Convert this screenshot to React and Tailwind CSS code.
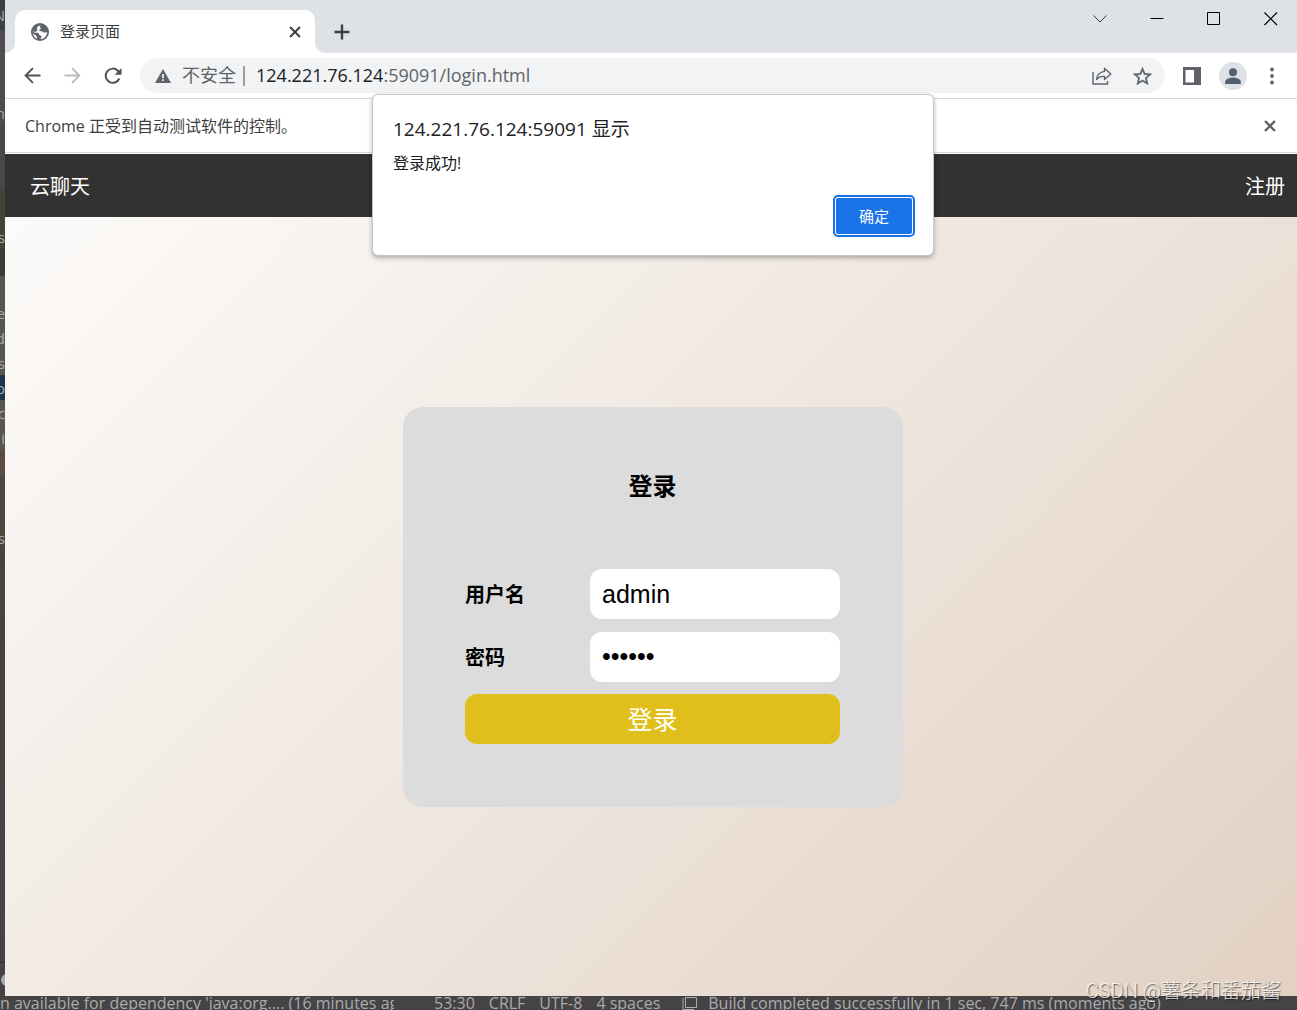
import React from "react";

const UI = "font-['Open_Sans','Noto_Sans_CJK_SC',sans-serif]";

const gutter = [
  { h: "h-[30px]", bg: "bg-[#3c3f44]", t: "N" },
  { h: "h-[70px]", bg: "bg-[#514b4d]", t: "" },
  { h: "h-[26px]", bg: "bg-[#514b4d]", t: "n" },
  { h: "h-[64px]", bg: "bg-[#4b4748]", t: "" },
  { h: "h-[35px]", bg: "bg-[#3f4537]", t: "" },
  { h: "h-[24px]", bg: "bg-[#3f4537]", t: "s" },
  { h: "h-[27px]", bg: "bg-[#3a3c38]", t: "" },
  { h: "h-[24px]", bg: "bg-[#56584f]", t: "" },
  { h: "h-[25px]", bg: "bg-[#56584f]", t: "e" },
  { h: "h-[25px]", bg: "bg-[#56584f]", t: "d" },
  { h: "h-[25px]", bg: "bg-[#56584f]", t: "s" },
  { h: "h-[25px]", bg: "bg-[#1f3650]", t: "o" },
  { h: "h-[25px]", bg: "bg-[#56584f]", t: "c" },
  { h: "h-[25px]", bg: "bg-[#56584f]", t: "i" },
  { h: "h-[25px]", bg: "bg-[#5d4b41]", t: "" },
  { h: "h-[50px]", bg: "bg-[#4b4748]", t: "" },
  { h: "h-[25px]", bg: "bg-[#4a4a3c]", t: "s" },
];

function Globe() {
  return (
    <svg viewBox="0 0 18 18" className="size-[18px]" aria-hidden="true">
      <circle cx="9" cy="9" r="9" fill="#5f6368" />
      <path d="M10.800 1.900C9.600 2.300 8.500 3 8.800 4c.2.800 1.200.600 1.100 1.500-.1.900-1.900 1-1.700 2 .1.700 1.300.700 2.300.700 1.400 0 1.500 1.400 2.800 1.400 1.100 0 2-.4 2.900-.2-.4 3.600-3 6.300-6.500 6.800-.2-1.100.8-1.500.8-2.500 0-1.500-2.300-.9-2.600-2.600-.1-.9-.9-1.300-1.900-1.300-1.500 0-2.800-.3-4.200-1.400.2 2.100 1.200 3.300 2.500 3.500 1 .2.700 1.400 1.500 1.900.4.300.4 1.200.3 1.900C3.300 14.600 1.600 11.900 1.900 8.400c1.200.4 2.300.5 3.300 0 1.100-.6 1.200-1.700.9-2.500-.3-1-.3-1.600.5-2.200 1-.7 2-1.800 4.200-1.800z" fill="#fff" />
    </svg>
  );
}

function Cross({ className, width = 2 }) {
  return (
    <svg viewBox="0 0 12 12" className={className} stroke="currentColor" strokeWidth={width} fill="none" aria-hidden="true">
      <path d="M1 1l10 10M11 1L1 11" />
    </svg>
  );
}

function TabStrip() {
  return (
    <header className="flex h-[53px] items-end bg-[#dee1e6]">
      <div className="h-[10px] w-[10px] shrink-0 bg-white">
        <div className="size-full rounded-br-[10px] bg-[#dee1e6]" />
      </div>
      <div className="flex h-[43px] w-[300px] shrink-0 items-center rounded-t-[10px] bg-white pl-4 pr-[14px] text-[#3c4043]">
        <Globe />
        <span className="ml-[11px] text-[15px]">登录页面</span>
        <button aria-label="关闭标签页" className="ml-auto">
          <Cross className="size-[12px]" />
        </button>
      </div>
      <div className="h-[10px] w-[10px] shrink-0 bg-white">
        <div className="size-full rounded-bl-[10px] bg-[#dee1e6]" />
      </div>
      <button aria-label="新标签页" className="ml-[9px] flex h-[43px] items-center text-[#3c4043]">
        <svg viewBox="0 0 16 16" className="size-[16px]" stroke="currentColor" strokeWidth="2.400" aria-hidden="true">
          <path d="M8 .5v15M.5 8h15" />
        </svg>
      </button>
      <div className="ml-auto flex h-full items-start gap-[43px] pr-[19px] pt-[12px] text-black">
        <button aria-label="搜索标签页">
          <svg viewBox="0 0 14 14" className="size-[14px]" fill="none" stroke="#333" aria-hidden="true">
            <path d="M.5 3.500l6.500 6.500 6.500-6.500" />
          </svg>
        </button>
        <button aria-label="最小化">
          <svg viewBox="0 0 14 14" className="size-[14px]" stroke="currentColor" aria-hidden="true">
            <path d="M.5 6.500h13" />
          </svg>
        </button>
        <button aria-label="最大化">
          <svg viewBox="0 0 14 14" className="size-[14px]" fill="none" stroke="currentColor" aria-hidden="true">
            <path d="M.5.5h12v12H.5z" />
          </svg>
        </button>
        <button aria-label="关闭">
          <svg viewBox="0 0 14 14" className="size-[14px]" fill="none" stroke="currentColor" strokeWidth="1.200" aria-hidden="true">
            <path d="M.5.5l12.500 12.500M13 .5L.5 13" />
          </svg>
        </button>
      </div>
    </header>
  );
}

function Toolbar() {
  return (
    <div className="flex h-[46px] items-center border-b border-[#d5d7da] bg-white pl-[19px] pr-[23px] text-[#5f6368]">
      <div className="flex shrink-0 gap-[23px]">
        <button aria-label="后退">
          <svg viewBox="0 0 18 18" className="size-[17px]" fill="none" stroke="#505458" strokeWidth="2" aria-hidden="true">
            <path d="M17.500 9H2M9.500 1.200L1.700 9l7.800 7.800" />
          </svg>
        </button>
        <button aria-label="前进">
          <svg viewBox="0 0 18 18" className="size-[17px]" fill="none" stroke="#babcbe" strokeWidth="2" aria-hidden="true">
            <path d="M.5 9H16M8.500 1.200L16.300 9l-7.800 7.800" />
          </svg>
        </button>
        <button aria-label="重新加载">
          <svg viewBox="0 0 18 18" className="size-[18px]" fill="none" stroke="#505458" strokeWidth="2" aria-hidden="true">
            <path d="M15.300 11.500A7.100 7.100 0 1 1 13.800 3.700L15.500 5.400" />
            <path d="M17.500 1v6.800h-6.800z" fill="#505458" stroke="none" />
          </svg>
        </button>
      </div>
      <div className="ml-[18px] flex h-[35px] min-w-0 flex-1 items-center rounded-full bg-[#f1f3f4] pl-[15px] pr-[13px]">
        <svg viewBox="0 0 16 14" className="h-[14px] w-[16px] shrink-0" aria-hidden="true">
          <path d="M8 0l8 14H0z" fill="#5f6368" />
          <path d="M7.200 5h1.600v4H7.200zM7.200 10.300h1.600v1.600H7.200z" fill="#fff" />
        </svg>
        <span className="ml-[11px] shrink-0 text-[18px]">不安全</span>
        <span className="ml-[7px] h-[20px] w-[2px] shrink-0 bg-[#9a9da1]" />
        <div className="ml-[11px] whitespace-nowrap text-[18px]">
          <span className="text-[#202124]">124.221.76.124</span>:59091/login.html
        </div>
        <div className="ml-auto flex shrink-0 items-center gap-[21px]">
          <button aria-label="分享">
            <svg viewBox="0 0 20 18" className="h-[18px] w-[20px]" fill="none" stroke="#5f6368" strokeWidth="1.400" aria-hidden="true">
              <path d="M1 5v12h14.500v-3" />
              <path d="M12.500 1.200L18.800 7l-6.300 5.500V9.400C9 9.200 6.700 10 4.500 12.600 5 8.300 7.700 5 12.500 4.400z" strokeLinejoin="round" />
            </svg>
          </button>
          <button aria-label="为此标签页添加书签">
            <svg viewBox="2 2 20 19" className="h-[18px] w-[19px]" fill="#5f6368" stroke="#5f6368" strokeWidth=".3" aria-hidden="true">
              <path d="M22 9.240l-7.190-.62L12 2 9.190 8.630 2 9.240l5.460 4.730L5.820 21 12 17.270 18.180 21l-1.630-7.030L22 9.240zM12 15.400l-3.760 2.270 1-4.280-3.320-2.880 4.380-.38L12 6.100l1.710 4.040 4.380.38-3.320 2.880 1 4.280L12 15.400z" />
            </svg>
          </button>
        </div>
      </div>
      <div className="ml-[18px] flex shrink-0 items-center">
        <button aria-label="侧边栏">
          <svg viewBox="0 0 18 18" className="size-[18px]" aria-hidden="true">
            <path fillRule="evenodd" d="M0 0h18v18H0zM2.500 3v12.500H11V3z" fill="#5f6368" />
          </svg>
        </button>
        <button aria-label="个人资料" className="ml-[18px]">
          <svg viewBox="0 0 28 28" className="size-[28px]" aria-hidden="true">
            <circle cx="14" cy="14" r="14" fill="#dee1e6" />
            <circle cx="14" cy="10.200" r="4" fill="#545f70" />
            <path d="M6.200 22v-2.300c0-2.600 4.500-4.200 7.800-4.200s7.800 1.600 7.800 4.200V22z" fill="#545f70" />
          </svg>
        </button>
        <button aria-label="更多" className="ml-[23px]">
          <svg viewBox="0 0 4 18" className="h-[18px] w-[4px]" fill="#5f6368" aria-hidden="true">
            <circle cx="2" cy="2.500" r="1.900" />
            <circle cx="2" cy="9" r="1.900" />
            <circle cx="2" cy="15.500" r="1.900" />
          </svg>
        </button>
      </div>
    </div>
  );
}

function AlertDialog() {
  return (
    <div className="absolute inset-x-0 top-[95px] flex justify-center pl-[4px]">
      <div
        role="alertdialog"
        aria-labelledby="alert-title"
        className="flex w-[560px] flex-col rounded-[5px] bg-white px-[20px] pb-[20px] pt-[20px] text-[#202124] shadow-[0_0_0_1px_#c4c6c8,0_2px_5px_1px_rgba(0,0,0,0.3)]"
      >
        <h1 id="alert-title" className="text-[19px] leading-[28px]">124.221.76.124:59091 显示</h1>
        <p className="mt-[8px] text-[16px] leading-[24px]">登录成功!</p>
        <button className="mt-[22px] h-[38px] w-[78px] self-end rounded-[3px] border border-white bg-[#1a73e8] text-[15px] text-white outline-2 outline-[#1a73e8]">
          确定
        </button>
      </div>
    </div>
  );
}

function LoginPage() {
  return (
    <main className="mt-px flex flex-1 flex-col bg-[linear-gradient(135deg,#fdfcfb_0%,#e2d1c3_100%)] font-['Liberation_Sans','Noto_Sans_CJK_SC',sans-serif]">
      <nav className="flex h-[63px] items-center justify-between bg-[#323232] pl-[25px] pr-[12px] pt-[2px] text-[20px] text-white">
        <span>云聊天</span>
        <a href="#register">注册</a>
      </nav>
      <div className="flex flex-1 items-center justify-center pl-[4px]">
        <form className="flex w-[500px] flex-col rounded-[20px] bg-[#dcdcdc] pb-[63px] pl-[62px] pr-[63px] pt-[62px]">
          <h3 className="text-center text-[24px] font-bold leading-[36px]">登录</h3>
          <div className="mt-[64px] flex items-center justify-between">
            <label htmlFor="username" className="pt-[3px] text-[20px] font-bold">用户名</label>
            <input id="username" type="text" defaultValue="admin" className="h-[50px] w-[250px] rounded-[12px] bg-white pl-[12px] pt-[2px] text-[25px]" />
          </div>
          <div className="mt-[13px] flex items-center justify-between">
            <label htmlFor="password" className="pt-[3px] text-[20px] font-bold">密码</label>
            <input id="password" type="password" defaultValue="123456" className="h-[50px] w-[250px] rounded-[12px] bg-white pl-[12px] text-[25px]" />
          </div>
          <button type="button" className="mt-[12px] h-[50px] rounded-[12px] bg-[#e0bf1c] pt-[4px] text-[25px] text-white">登录</button>
        </form>
      </div>
    </main>
  );
}

export default function App() {
  return (
    <div className={`relative flex min-h-screen flex-col overflow-hidden bg-[#454344] ${UI}`}>
      <div className="flex flex-1">
        <aside aria-hidden="true" className="flex w-[5px] shrink-0 flex-col overflow-hidden bg-[#454344] text-[15px] leading-[24px] text-[#a9a9a9]">
          {gutter.map((g, i) => (
            <div key={i} className={`flex w-[5px] shrink-0 items-center justify-end overflow-hidden ${g.h} ${g.bg}`}>{g.t}</div>
          ))}
          <div className="mt-auto flex h-[34px] items-center border-t border-[#2b2b2b]">
            <span className="ml-px size-[12px] shrink-0 rounded-full bg-[#a9a9a9]" />
          </div>
        </aside>
        <div className="relative flex min-w-0 flex-1 flex-col bg-white">
          <TabStrip />
          <Toolbar />
          <div className="flex h-[54px] items-center justify-between border-b border-[#d5d7da] pl-[20px] pr-[21px] text-[16px] text-[#3c4043]">
            <span>Chrome 正受到自动测试软件的控制。</span>
            <button aria-label="关闭" className="text-[#5f6368]">
              <Cross className="size-[12px]" width={2.4} />
            </button>
          </div>
          <LoginPage />
          <AlertDialog />
        </div>
      </div>
      <footer className="flex h-[14px] items-start overflow-hidden whitespace-nowrap text-[16px] leading-[14px] text-[#a9abad]">
        <span className="w-[394px] shrink-0 overflow-hidden">n available for dependency 'java:org.... (16 minutes ago)</span>
        <span className="ml-[40px]">53:30</span>
        <span className="ml-[14px]">CRLF</span>
        <span className="ml-[14px]">UTF-8</span>
        <span className="ml-[14px]">4 spaces</span>
        <svg viewBox="0 0 16 14" className="ml-[22px] h-[14px] w-[16px] shrink-0" fill="none" stroke="#a9abad" aria-hidden="true">
          <path d="M3.500 1.500h11v10h-11zM1 2v11.500h11" />
        </svg>
        <span className="ml-[10px]">Build completed successfully in 1 sec, 747 ms (moments ago)</span>
      </footer>
      <div className="absolute bottom-[6px] right-[16px] font-['Roboto','Noto_Sans_CJK_SC',sans-serif] text-[20px] font-light leading-[26px] text-white/80 [text-shadow:1px_1px_1px_rgba(0,0,0,0.6)]">
        CSDN @薯条和番茄酱
      </div>
    </div>
  );
}
